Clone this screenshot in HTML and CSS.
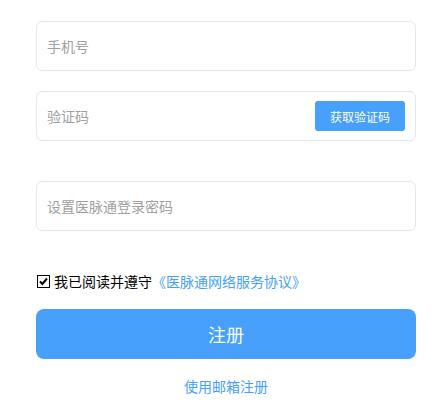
FILE: index.html
```html
<!DOCTYPE html>
<html lang="zh-CN">
<head>
    <meta charset="UTF-8">
    <meta name="viewport" content="width=device-width, initial-scale=1.0">
    <title>注册</title>
    <link rel="stylesheet" href="styles.css">
</head>
<body>
    <form class="register">
        <div class="field">
            <input type="text" placeholder="手机号">
        </div>
        <div class="field code-field">
            <input type="text" placeholder="验证码">
            <button type="button" class="code-btn">获取验证码</button>
        </div>
        <div class="field pwd-field">
            <input type="password" placeholder="设置医脉通登录密码">
        </div>
        <label class="agree">
            <span class="check">
                <svg width="11" height="11" viewBox="0 0 11 11"><path d="M2 5.5 L4.4 8 L9 2.5" fill="none" stroke="#000" stroke-width="2"/></svg>
            </span>
            我已阅读并遵守<a href="#">《医脉通网络服务协议》</a>
        </label>
        <button type="submit" class="submit">注册</button>
        <a href="#" class="email-link">使用邮箱注册</a>
    </form>
</body>
</html>
```

FILE: styles.css
```css
body {
    margin: 0;
    background: #fff;
    font-family: "Noto Sans CJK SC", "Noto Sans", sans-serif;
    color: #000;
}

.register {
    width: 380px;
    margin-left: 36px;
    padding-top: 21px;
    display: flex;
    flex-direction: column;
}

.field {
    height: 50px;
    box-sizing: border-box;
    border: 1px solid #e4e7ed;
    border-radius: 6px;
    display: flex;
    align-items: center;
    padding: 0 10px;
    margin-bottom: 20px;
}

.code-field {
    margin-bottom: 40px;
}

.pwd-field {
    margin-bottom: 40px;
}

.field input {
    flex: 1;
    border: none;
    outline: none;
    font-family: inherit;
    font-size: 14px;
    color: #333;
    padding: 0;
    background: transparent;
}

.field input::placeholder {
    color: #a0a0a0;
}

.code-btn {
    width: 90px;
    height: 30px;
    border: none;
    border-radius: 3px;
    background: #46a0fc;
    color: #fff;
    font-family: inherit;
    font-size: 12px;
}

.agree {
    display: flex;
    align-items: center;
    font-size: 14px;
    height: 20px;
    margin-bottom: 18px;
}

.agree a {
    color: #46a0fc;
    text-decoration: none;
}

.check {
    width: 11px;
    height: 11px;
    border: 1px solid #000;
    margin: 0 4px 0 1px;
    display: flex;
}

.submit {
    height: 50px;
    border: none;
    border-radius: 8px;
    background: #46a0fc;
    color: #fff;
    font-family: inherit;
    font-size: 18px;
    margin-bottom: 17px;
}

.email-link {
    align-self: center;
    color: #46a0fc;
    font-size: 14px;
    text-decoration: none;
}
```
